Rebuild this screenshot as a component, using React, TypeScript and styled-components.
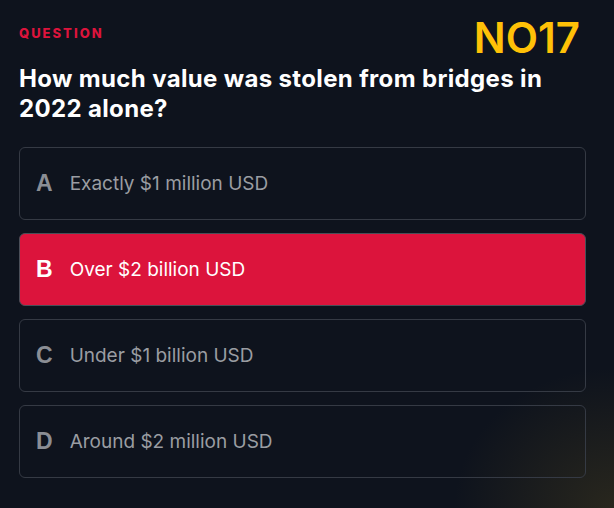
import React from "react";
import styled, { createGlobalStyle } from "styled-components";

const Global = createGlobalStyle`
  html, body { margin: 0; padding: 0; }
  body {
    background: #0e131d;
    font-family: Inter, "Noto Sans", sans-serif;
    -webkit-font-smoothing: antialiased;
  }
`;

const Page = styled.div`
  position: relative;
  width: 614px;
  height: 508px;
  box-sizing: border-box;
  padding: 26px 28px 0 19px;
  overflow: hidden;
  background:
    radial-gradient(ellipse 160px 140px at 100% 100%, rgba(90, 75, 30, 0.35), rgba(14, 19, 29, 0) 100%),
    #0e131d;
`;

const Header = styled.div`
  display: flex;
  justify-content: space-between;
  align-items: flex-start;
`;

const Label = styled.div`
  color: #dc143c;
  font-size: 13px;
  font-weight: 800;
  letter-spacing: 2px;
  line-height: 14px;
`;

const Number = styled.div`
  color: #ffc107;
  font-size: 42px;
  font-weight: 600;
  line-height: 1;
  margin-top: -9px;
  margin-bottom: -19px;
  margin-right: 6px;
`;

const Question = styled.h1`
  margin: 24px 0 23px;
  color: #ffffff;
  font-size: 24px;
  font-weight: 700;
  letter-spacing: 0.35px;
  line-height: 30px;
`;

const Options = styled.div`
  display: flex;
  flex-direction: column;
  gap: 13px;
`;

const Option = styled.div<{ $selected?: boolean }>`
  display: flex;
  align-items: center;
  gap: 17px;
  height: 73px;
  box-sizing: border-box;
  padding: 0 16px;
  border: 1px solid ${(p) => (p.$selected ? "#4a4f58" : "#353a44")};
  border-radius: 6px;
  background: ${(p) => (p.$selected ? "#dc143c" : "transparent")};
`;

const Letter = styled.span<{ $selected?: boolean }>`
  color: ${(p) => (p.$selected ? "#ffffff" : "#8b8e94")};
  font-family: "Liberation Sans", Arial, sans-serif;
  font-size: 23px;
  font-weight: 700;
  min-width: 14px;
`;

const Text = styled.span<{ $selected?: boolean }>`
  color: ${(p) => (p.$selected ? "#ffffff" : "#9a9da2")};
  font-size: 19px;
  font-weight: 400;
`;

const options = [
  { l: "A", t: "Exactly $1 million USD" },
  { l: "B", t: "Over $2 billion USD", s: true },
  { l: "C", t: "Under $1 billion USD" },
  { l: "D", t: "Around $2 million USD" },
];

export default function App() {
  return (
    <>
      <Global />
      <Page>
        <Header>
          <Label>QUESTION</Label>
          <Number>NO17</Number>
        </Header>
        <Question>
          How much value was stolen from bridges in
          <br />
          2022 alone?
        </Question>
        <Options>
          {options.map((o) => (
            <Option key={o.l} $selected={o.s}>
              <Letter $selected={o.s}>{o.l}</Letter>
              <Text $selected={o.s}>{o.t}</Text>
            </Option>
          ))}
        </Options>
      </Page>
    </>
  );
}
